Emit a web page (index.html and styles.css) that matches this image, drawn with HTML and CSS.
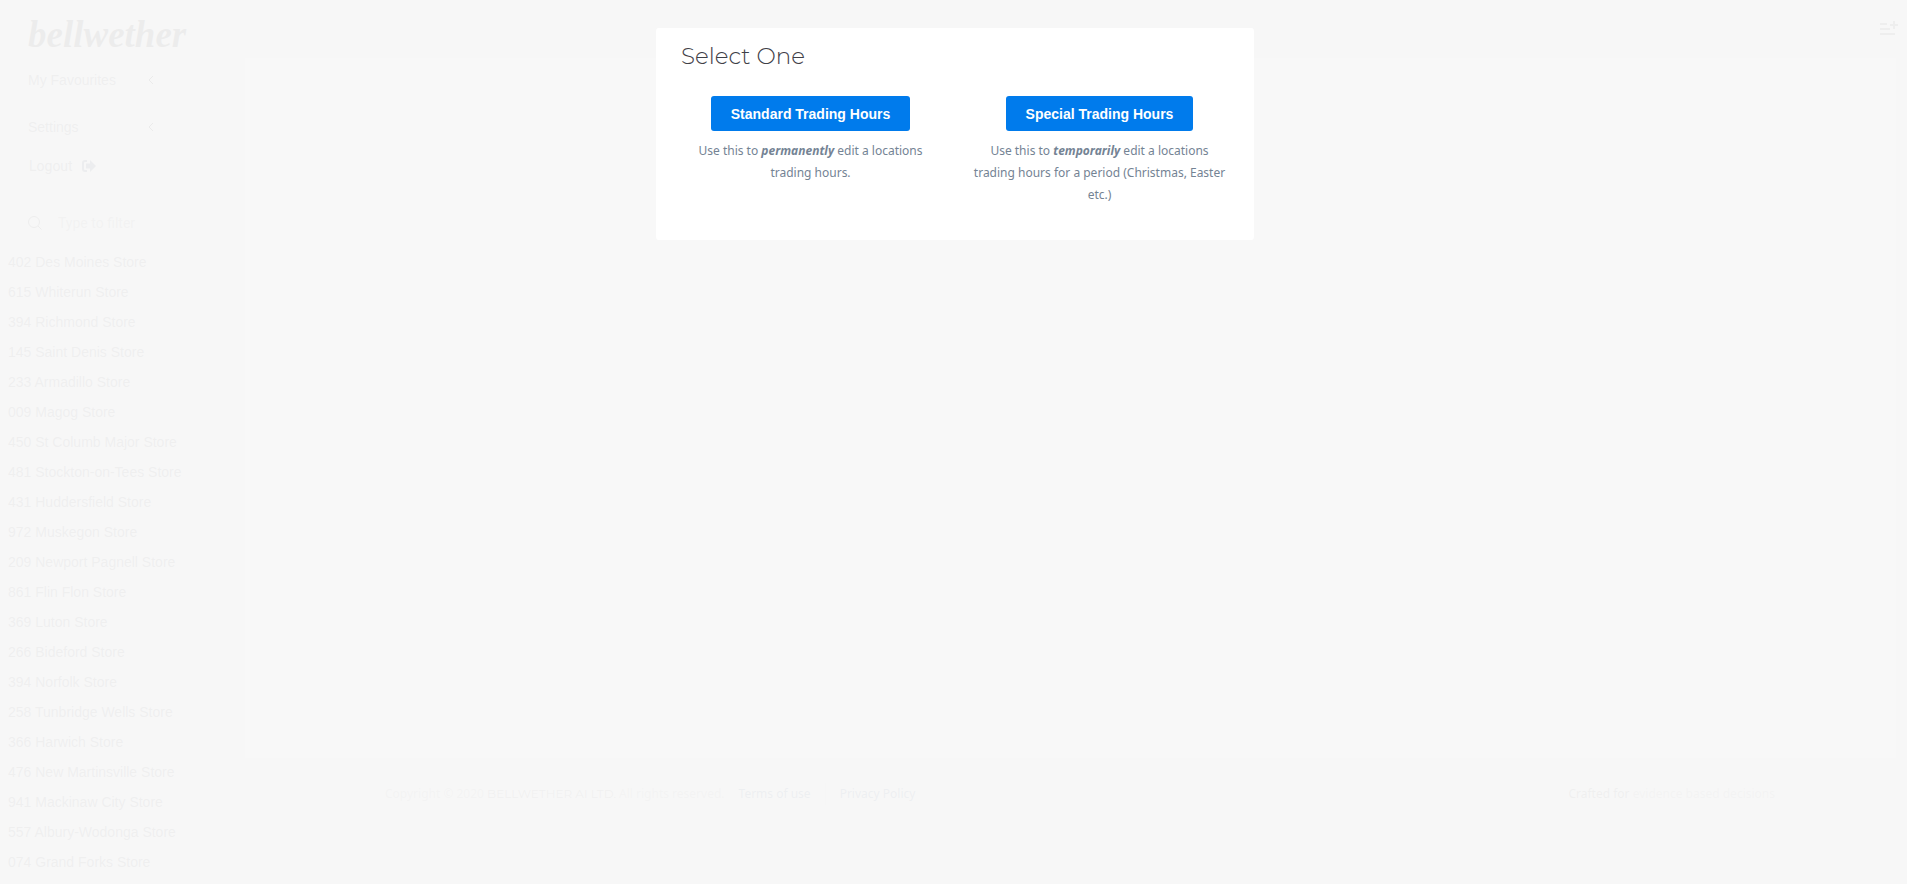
FILE: index.html
```html
<!DOCTYPE html>
<html lang="en">
<head>
    <meta charset="UTF-8">
    <meta name="viewport" content="width=device-width, initial-scale=1.0">
    <title>Trading Hours</title>
    <link rel="stylesheet" href="styles.css">
</head>
<body>
    <div class="page">
        <aside class="sidebar">
            <a href="#" class="logo">bellwether</a>
            <nav class="menu">
                <a href="#" class="menu-link">My Favourites
                    <svg class="arrow" viewBox="0 0 6 10"><path d="M5 1L1 5l4 4"/></svg>
                </a>
                <a href="#" class="menu-link">Settings
                    <svg class="arrow" viewBox="0 0 6 10"><path d="M5 1L1 5l4 4"/></svg>
                </a>
                <a href="#" class="menu-link logout">Logout
                    <svg class="logout-icon" viewBox="0 0 14 12"><path d="M5 1H3a2 2 0 0 0-2 2v6a2 2 0 0 0 2 2h2" fill="none" stroke="currentColor" stroke-width="2"/><path d="M8 0l6 6-6 6V8.500H4v-5h4z" fill="currentColor"/></svg>
                </a>
            </nav>
            <div class="filter">
                <svg class="search-icon" viewBox="0 0 14 14"><circle cx="6" cy="6" r="5.500"/><path d="M10 10l3.500 3.500"/></svg>
                <input type="text" placeholder="Type to filter" aria-label="Type to filter">
            </div>
            <ul class="stores">
                <li><a href="#">402 Des Moines Store</a></li>
                <li><a href="#">615 Whiterun Store</a></li>
                <li><a href="#">394 Richmond Store</a></li>
                <li><a href="#">145 Saint Denis Store</a></li>
                <li><a href="#">233 Armadillo Store</a></li>
                <li><a href="#">009 Magog Store</a></li>
                <li><a href="#">450 St Columb Major Store</a></li>
                <li><a href="#">481 Stockton-on-Tees Store</a></li>
                <li><a href="#">431 Huddersfield Store</a></li>
                <li><a href="#">972 Muskegon Store</a></li>
                <li><a href="#">209 Newport Pagnell Store</a></li>
                <li><a href="#">861 Flin Flon Store</a></li>
                <li><a href="#">369 Luton Store</a></li>
                <li><a href="#">266 Bideford Store</a></li>
                <li><a href="#">394 Norfolk Store</a></li>
                <li><a href="#">258 Tunbridge Wells Store</a></li>
                <li><a href="#">366 Harwich Store</a></li>
                <li><a href="#">476 New Martinsville Store</a></li>
                <li><a href="#">941 Mackinaw City Store</a></li>
                <li><a href="#">557 Albury-Wodonga Store</a></li>
                <li><a href="#">074 Grand Forks Store</a></li>
            </ul>
        </aside>
        <div class="main">
            <header class="topbar">
                <button type="button" class="add-button" aria-label="Add to list">
                    <svg viewBox="0 0 18 14"><path d="M0 3h7M0 8h10M0 13h15M10 4h8M14 0v8"/></svg>
                </button>
            </header>
            <main class="content"></main>
            <footer class="footer">
                <div class="copyright">
                    <span>Copyright © 2020 <span class="company">BELLWETHER AI LTD.</span> All rights reserved.</span>
                    <a href="#" class="terms">Terms of use</a>
                    <a href="#" class="privacy">Privacy Policy</a>
                </div>
                <div><span class="crafted">Crafted for</span> evidence based decisions</div>
            </footer>
        </div>
    </div>

    <div class="overlay">
        <div class="modal" role="dialog" aria-modal="true" aria-labelledby="modalTitle">
            <h1 id="modalTitle">Select One</h1>
            <div class="options">
                <div class="option">
                    <button type="button" class="btn">Standard Trading Hours</button>
                    <p>Use this to <em>permanently</em> edit a locations trading hours.</p>
                </div>
                <div class="option">
                    <button type="button" class="btn">Special Trading Hours</button>
                    <p>Use this to <em>temporarily</em> edit a locations trading hours for a period (Christmas, Easter etc.)</p>
                </div>
            </div>
        </div>
    </div>
</body>
</html>
```
FILE: styles.css
```css
* {
    box-sizing: border-box;
}
body {
    margin: 0;
    font-family: "Liberation Sans", Arial, sans-serif;
    font-size: 14px;
    color: #4a4c55;
    background: #e6e6e6;
}
a {
    color: inherit;
    text-decoration: none;
}
.page {
    display: flex;
    min-height: 100vh;
}
.sidebar {
    width: 245px;
    flex-shrink: 0;
}
.logo {
    display: block;
    height: 65px;
    padding: 10px 0 0 28px;
    font-family: "Liberation Serif", serif;
    font-size: 37px;
    font-weight: bold;
    font-style: italic;
    line-height: 50px;
    color: #222;
}
.menu {
    display: flex;
    flex-direction: column;
    gap: 17px;
    padding: 0 91px 0 28px;
}
.menu-link {
    display: flex;
    align-items: center;
    justify-content: space-between;
    height: 30px;
}
.arrow {
    width: 6px;
    height: 10px;
    fill: none;
    stroke: #000;
}
.logout {
    justify-content: flex-start;
    gap: 9px;
    margin-top: -8px;
    padding-left: 1px;
    font-family: Roboto, sans-serif;
}
.logout-icon {
    width: 14px;
    height: 12px;
    color: #20304a;
}
.filter {
    display: flex;
    align-items: center;
    gap: 16px;
    height: 40px;
    margin: 22px 0 4px 28px;
}
.search-icon {
    width: 14px;
    height: 14px;
    fill: none;
    stroke: #333;
}
.filter input {
    width: 150px;
    padding: 0;
    border: none;
    outline: none;
    background: none;
    font-family: Roboto, sans-serif;
    font-size: 14px;
}
.filter input::placeholder {
    color: #8a8a8a;
}
.stores {
    margin: 0;
    padding: 0 0 0 8px;
    list-style: none;
    line-height: 30px;
}
.main {
    display: flex;
    flex-direction: column;
    flex: 1;
    padding-right: 11px;
}
.topbar {
    display: flex;
    justify-content: flex-end;
    height: 58px;
    padding-top: 21px;
}
.add-button {
    width: 18px;
    height: 14px;
    margin-right: -2px;
    padding: 0;
    border: none;
    background: none;
}
.add-button svg {
    display: block;
    fill: none;
    stroke: #444;
    stroke-width: 2;
}
.content {
    flex: 1;
    background: #fff;
}
.footer {
    display: flex;
    justify-content: space-between;
    height: 126px;
    padding: 25px 121px 0 140px;
    font-family: "Noto Sans", sans-serif;
    font-size: 12px;
    line-height: 22px;
    color: #999;
}
.copyright {
    display: flex;
    align-items: flex-start;
}
.company {
    font-family: Montserrat, Inter, sans-serif;
    color: #666;
}
.terms {
    margin-left: 14px;
    padding-right: 14px;
    border-right: 1px solid #ccc;
    color: #2c4a78;
}
.privacy {
    margin-left: 14px;
    color: #2c4a78;
}
.crafted {
    color: #555;
}
.overlay {
    position: fixed;
    inset: 0;
    display: flex;
    align-items: flex-start;
    justify-content: center;
    padding: 28px 17px 28px 20px;
    background: rgba(248, 248, 248, 0.95);
}
.modal {
    width: 100%;
    max-width: 598px;
    padding: 12px 10px 34px;
    background: #fff;
    border-radius: 3px;
}
.modal h1 {
    margin: 0 0 24px;
    padding: 0 15px;
    font-family: Montserrat, Inter, sans-serif;
    font-size: 23px;
    font-weight: 300;
    line-height: 32px;
    color: #3f4047;
}
.options {
    display: flex;
}
.option {
    flex: 1;
    padding: 0 15px;
    text-align: center;
}
.btn {
    height: 35px;
    padding: 0 20px;
    border: none;
    border-radius: 3px;
    background: #007bec;
    color: #fff;
    font-family: "Liberation Sans", Arial, sans-serif;
    font-size: 14px;
    font-weight: bold;
    cursor: pointer;
}
.btn:hover {
    background: #0069ca;
}
.option p {
    margin: 9px 0 0;
    font-family: "Noto Sans", sans-serif;
    font-size: 12px;
    line-height: 22px;
    color: #748394;
}
.option em {
    font-weight: bold;
}
```
